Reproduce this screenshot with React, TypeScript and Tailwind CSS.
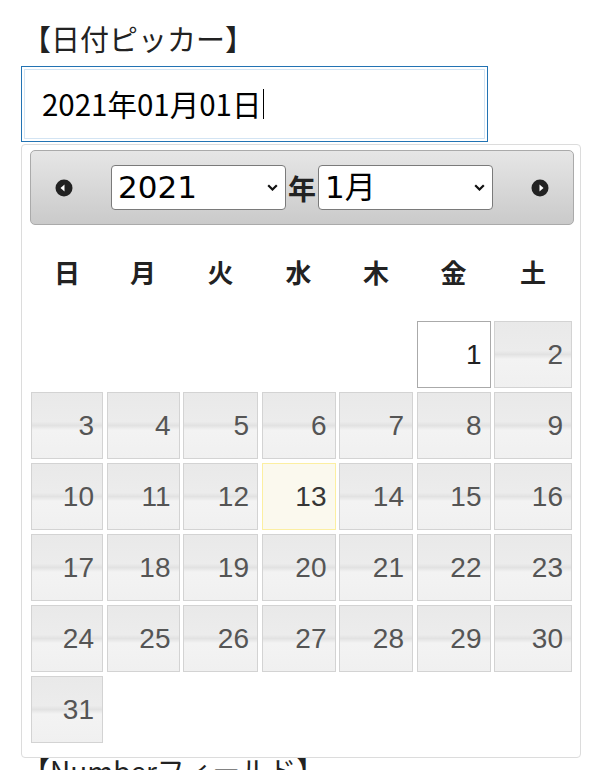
import type { ReactNode } from 'react';

const cellBg =
  'bg-[linear-gradient(to_bottom,#e9e9e9_0%,#ececec_44%,#e2e2e2_50%,#f3f3f3_57%,#f0f0f0_100%)]';

const cols = 'grid grid-cols-[72px_73px_75px_74px_74px_74px_78px] gap-x-[3.5px]';

function CircleArrow({ dir }: { dir: 'left' | 'right' }) {
  return (
    <svg width="18" height="18" viewBox="0 0 18 18">
      <circle cx="9" cy="9" r="8.5" fill="#222" />
      {dir === 'left' ? (
        <polygon points="5.5,9 9.5,5.5 9.5,12.5" fill="#fff" />
      ) : (
        <polygon points="12.5,9 8.5,5.5 8.5,12.5" fill="#fff" />
      )}
    </svg>
  );
}

function FakeSelect({ children }: { children: ReactNode }) {
  return (
    <div className="flex items-center justify-between w-[175px] h-[45px] bg-white border border-[#7a7a7a] rounded-[4px] pl-[6px] pr-[7px]">
      <span className="text-[31px] leading-none text-black font-['DejaVu_Sans','Noto_Sans_CJK_JP',sans-serif]">
        {children}
      </span>
      <svg width="11" height="7" viewBox="0 0 11 7">
        <path d="M1.2 1.2 L5.5 5.5 L9.8 1.2" stroke="#111" strokeWidth="2.2" fill="none" />
      </svg>
    </div>
  );
}

const weekdays = ['日', '月', '火', '水', '木', '金', '土'];

export default function App() {
  const days: (number | null)[] = [null, null, null, null, null];
  for (let d = 1; d <= 31; d++) days.push(d);

  return (
    <div className="relative w-[600px] h-[770px] overflow-hidden bg-white text-[#222] font-['Noto_Sans_CJK_JP',sans-serif]">
      <div className="pl-[21px] pt-[18px]">
        <h2 className="text-[29px] leading-[40px] pl-[1px]">【日付ピッカー】</h2>

        {/* Input (focused) */}
        <div className="mt-[8px] w-[467px] h-[76px] border border-[#2273b3] p-[2px]">
          <div className="h-full border border-[#d3e4f3] flex items-center pl-[17px]">
            <span className="text-[29.5px] text-black leading-none">2021年01月01日</span>
            <span className="ml-[2px] w-[1px] h-[30px] bg-black" />
          </div>
        </div>

        <p className="mt-[608px] text-[28px] leading-[40px] pl-[1px]">【Numberフィールド】</p>
      </div>

      {/* Datepicker popup */}
      <div className="absolute left-[21px] top-[144px] w-[560px] h-[614px] bg-white border border-[#dcdcdc] rounded-[4px] pt-[5px] pl-[8px]">
        {/* Header */}
        <div className="flex items-center w-[544px] h-[75px] border border-[#aaa] rounded-[5px] bg-[linear-gradient(to_bottom,#e6e6e6,#cacaca)] px-[24px]">
          <CircleArrow dir="left" />
          <div className="flex-1 flex items-center justify-center">
            <FakeSelect>2021</FakeSelect>
            <span className="mx-[2px] text-[28px] font-bold leading-none text-[#222]">年</span>
            <FakeSelect>1月</FakeSelect>
          </div>
          <CircleArrow dir="right" />
        </div>

        <div className="ml-[1px] w-[541px]">
          {/* Weekdays */}
          <div className={`${cols} h-[92px] items-center`}>
            {weekdays.map((w) => (
              <div key={w} className="text-center text-[26px] font-bold text-[#222]">
                {w}
              </div>
            ))}
          </div>

          {/* Days */}
          <div className={`${cols} gap-y-[4px] mt-[4px] font-['Liberation_Sans',Arial,sans-serif]`}>
            {days.map((d, i) => {
              if (d === null) return <div key={'e' + i} className="h-[67px]" />;
              let cls = `border border-[#d3d3d3] ${cellBg} text-[#555]`;
              if (d === 1) cls = 'border border-[#aaa] bg-white text-[#212121]';
              if (d === 13) cls = 'border border-[#fcefa1] bg-[#fbf9ee] text-[#363636]';
              return (
                <div
                  key={d}
                  className={`h-[67px] flex items-center justify-end pr-[8px] text-[28px] ${cls}`}
                >
                  {d}
                </div>
              );
            })}
          </div>
        </div>
      </div>
    </div>
  );
}
